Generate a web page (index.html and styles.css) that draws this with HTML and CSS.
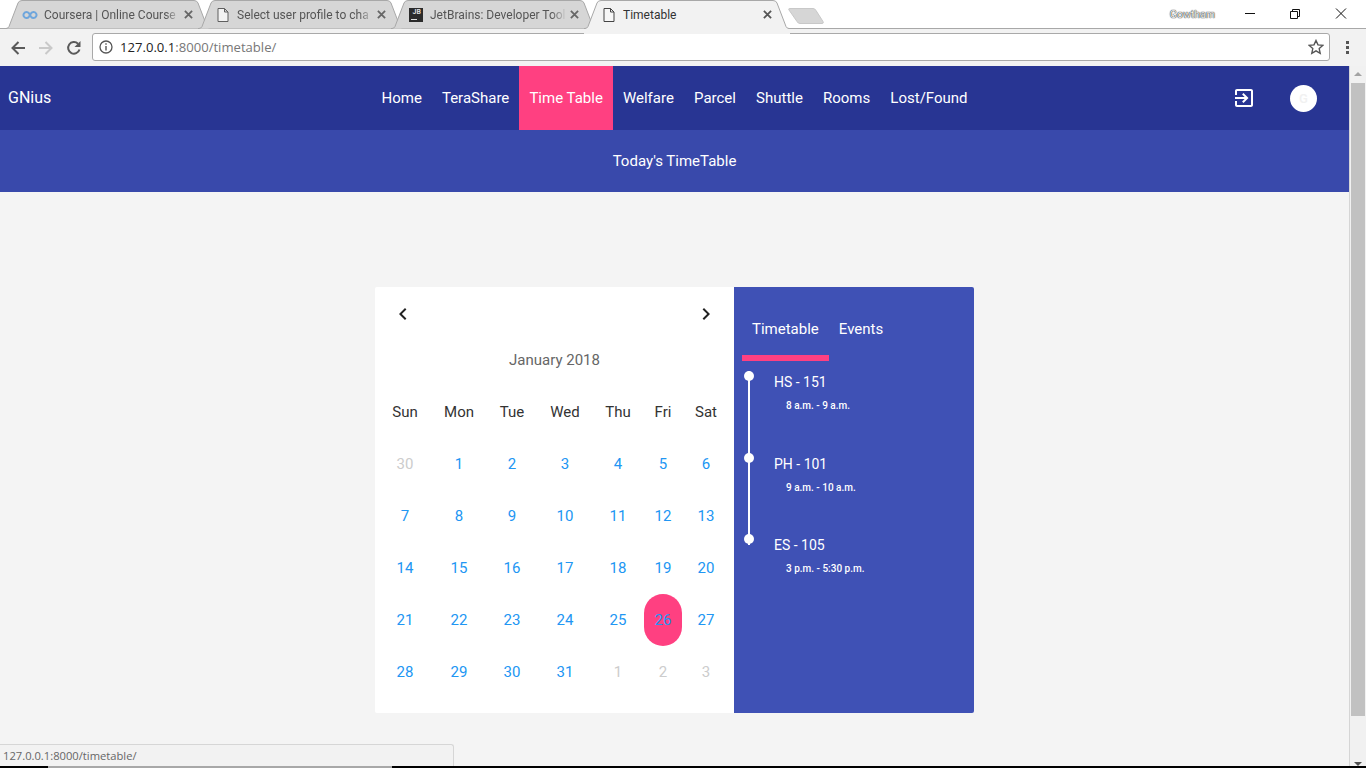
FILE: index.html
```html
<!DOCTYPE html>
<html lang="en">
<head>
    <meta charset="UTF-8">
    <title>Timetable</title>
    <link rel="stylesheet" href="styles.css">
</head>
<body>
<div class="tabstrip">
    <div class="tabs">
        <div class="tab">
            <svg class="tab-bg" viewBox="0 0 206 29"><path d="M0 28.500h1q2 0 3-2L13 3q1-2.500 4-2.500h172q3 0 4 2.500l9 23.500q1 2 3 2h1" fill="#d6d6d6" stroke="#a8a8a8"/></svg>
            <svg class="fav" viewBox="0 0 16 16"><path d="M4.500 5a3 3 0 1 0 2.400 4.800L9.100 6.200A3 3 0 1 1 11.500 11a3 3 0 0 1-2.400-1.200L6.900 6.200A3 3 0 0 0 4.500 5z" fill="none" stroke="#6fa6dc" stroke-width="2"/></svg>
            <span class="tab-title">Coursera | Online Course</span>
            <svg class="tab-x" viewBox="0 0 10 10"><path d="M1 1l8 8M9 1l-8 8" stroke="#666" stroke-width="2"/></svg>
        </div>
        <div class="tab">
            <svg class="tab-bg" viewBox="0 0 206 29"><path d="M0 28.500h1q2 0 3-2L13 3q1-2.500 4-2.500h172q3 0 4 2.500l9 23.500q1 2 3 2h1" fill="#d6d6d6" stroke="#a8a8a8"/></svg>
            <svg class="fav" viewBox="0 0 16 16"><path d="M3 1.500h6.500l3.500 3.500v9.500H3zM9.500 1.500V5H13" fill="#f2f2f2" stroke="#5f5f5f"/></svg>
            <span class="tab-title">Select user profile to cha</span>
            <svg class="tab-x" viewBox="0 0 10 10"><path d="M1 1l8 8M9 1l-8 8" stroke="#666" stroke-width="2"/></svg>
        </div>
        <div class="tab">
            <svg class="tab-bg" viewBox="0 0 206 29"><path d="M0 28.500h1q2 0 3-2L13 3q1-2.500 4-2.500h172q3 0 4 2.500l9 23.500q1 2 3 2h1" fill="#d6d6d6" stroke="#a8a8a8"/></svg>
            <span class="fav jb">JB</span>
            <span class="tab-title">JetBrains: Developer Tool</span>
            <svg class="tab-x" viewBox="0 0 10 10"><path d="M1 1l8 8M9 1l-8 8" stroke="#666" stroke-width="2"/></svg>
        </div>
        <div class="tab tab-active">
            <svg class="tab-bg" viewBox="0 0 206 34"><path d="M0 28.500h1q2 0 3-2L13 3q1-2.500 4-2.500h172q3 0 4 2.500l9 23.500q1 2 3 2h1V34H0z" fill="#f2f2f2"/><path d="M0 28.500h1q2 0 3-2L13 3q1-2.500 4-2.500h172q3 0 4 2.500l9 23.500q1 2 3 2h1" fill="none" stroke="#a8a8a8"/></svg>
            <svg class="fav" viewBox="0 0 16 16"><path d="M3 1.500h6.500l3.500 3.500v9.500H3zM9.500 1.500V5H13" fill="#f7f7f7" stroke="#444"/></svg>
            <span class="tab-title">Timetable</span>
            <svg class="tab-x" viewBox="0 0 10 10"><path d="M1 1l8 8M9 1l-8 8" stroke="#555" stroke-width="2"/></svg>
        </div>
        <svg class="newtab" viewBox="0 0 36 19"><path d="M2 2.500h23q2 0 3 2l7 11q1 2-1 2H12q-2 0-3-2L1 4q-1-1.500 1-1.500z" fill="#d6d6d6" stroke="#c8c8c8"/></svg>
    </div>
    <div class="winctl">
        <span class="user">Gowtham</span>
        <svg class="wbtn" viewBox="0 0 46 16"><path d="M19 7.500h10" stroke="#111"/></svg>
        <svg class="wbtn" viewBox="0 0 46 16"><path d="M18.500 5.500h7v7h-7zM20.500 5.500v-2h7v7h-2" fill="none" stroke="#111"/></svg>
        <svg class="wbtn" viewBox="0 0 46 16"><path d="M18 2.500l10 10M28 2.500l-10 10" stroke="#111"/></svg>
    </div>
</div>

<div class="toolbar">
    <svg class="tool-ic" viewBox="0 0 16 16"><path d="M15 8H2.500M8.500 2 2.500 8l6 6" fill="none" stroke="#5a5a5a" stroke-width="2"/></svg>
    <svg class="tool-ic" viewBox="0 0 16 16"><path d="M1 8h12.500M7.500 2l6 6-6 6" fill="none" stroke="#c9c9c9" stroke-width="2"/></svg>
    <svg class="tool-ic" viewBox="0 0 16 16"><path d="M13.500 9.500A5.800 5.800 0 1 1 12 3.700" fill="none" stroke="#5a5a5a" stroke-width="2"/><path d="M14.500 1v6h-6z" fill="#5a5a5a"/></svg>
    <div class="omnibox">
        <svg class="info" viewBox="0 0 14 14"><circle cx="7" cy="7" r="6" fill="none" stroke="#555" stroke-width="1.300"/><path d="M6.300 6h1.400v4.500H6.300zM6.300 3.300h1.400v1.500H6.300z" fill="#555"/></svg>
        <span class="url"><b>127.0.0.1</b>:8000/timetable/</span>
        <svg class="star" viewBox="0 0 16 16"><path d="M8 1.500l2 4.400 4.800.5-3.600 3.200 1 4.700L8 11.900l-4.200 2.400 1-4.700L1.200 6.400 6 5.900z" fill="none" stroke="#555" stroke-width="1.400"/></svg>
    </div>
    <div class="menu-dots"><i></i><i></i><i></i></div>
</div>

<div class="viewport">
    <div class="page">
        <nav class="navbar">
            <a class="brand">GNius</a>
            <ul class="nav-links">
                <li>Home</li>
                <li>TeraShare</li>
                <li class="active">Time Table</li>
                <li>Welfare</li>
                <li>Parcel</li>
                <li>Shuttle</li>
                <li>Rooms</li>
                <li>Lost/Found</li>
            </ul>
            <div class="nav-right">
                <svg class="exit-ic" viewBox="0 0 24 24"><path d="M10.090 15.590 11.500 17l5-5-5-5-1.410 1.410L12.670 11H3v2h9.670l-2.580 2.590zM19 3H5c-1.110 0-2 .9-2 2v4h2V5h14v14H5v-4H3v4c0 1.100.89 2 2 2h14c1.100 0 2-.9 2-2V5c0-1.100-.9-2-2-2z" fill="#fff"/></svg>
                <span class="avatar">G</span>
            </div>
        </nav>
        <header class="subhead">Today's TimeTable</header>

        <main class="content">
            <section class="card">
                <div class="calendar">
                    <div class="cal-nav">
                        <svg viewBox="0 0 24 24"><path d="M15.410 7.410 14 6l-6 6 6 6 1.410-1.410L10.830 12z" fill="#222"/></svg>
                        <svg viewBox="0 0 24 24"><path d="M10 6 8.590 7.410 13.170 12l-4.580 4.590L10 18l6-6z" fill="#222"/></svg>
                    </div>
                    <div class="cal-title">January 2018</div>
                    <div class="cal-grid" id="calGrid"></div>
                </div>
                <aside class="side">
                    <div class="side-tabs">
                        <span class="side-tab">Timetable</span>
                        <span class="side-tab">Events</span>
                    </div>
                    <div class="side-indicator"></div>
                    <ul class="timeline">
                        <li><b>HS - 151</b><small>8 a.m. - 9 a.m.</small></li>
                        <li><b>PH - 101</b><small>9 a.m. - 10 a.m.</small></li>
                        <li><b>ES - 105</b><small>3 p.m. - 5:30 p.m.</small></li>
                    </ul>
                </aside>
            </section>
        </main>
        <div class="status">127.0.0.1:8000/timetable/</div>
    </div>
    <div class="scrollbar">
        <span class="arrow-up"></span>
        <span class="thumb"></span>
        <span class="arrow-down"></span>
    </div>
</div>
<div class="edge"></div>

<script>
    const heads = ['Sun', 'Mon', 'Tue', 'Wed', 'Thu', 'Fri', 'Sat'];
    const days = [30, 1, 2, 3, 4, 5, 6, 7, 8, 9, 10, 11, 12, 13, 14, 15, 16, 17, 18, 19, 20,
        21, 22, 23, 24, 25, 26, 27, 28, 29, 30, 31, 1, 2, 3];
    const grid = document.getElementById('calGrid');

    heads.forEach(h => {
        const el = document.createElement('div');
        el.className = 'cal-head';
        el.textContent = h;
        grid.appendChild(el);
    });

    days.forEach((d, i) => {
        const el = document.createElement('div');
        el.className = 'cal-day';
        if (i === 0 || i > 31) el.classList.add('muted');
        if (i === 26) el.classList.add('today');
        el.textContent = d;
        grid.appendChild(el);
    });
</script>
</body>
</html>
```

FILE: styles.css
```css
* {
    box-sizing: border-box;
}
html, body {
    margin: 0;
    height: 768px;
    overflow: hidden;
}
body {
    font-family: Roboto, "Liberation Sans", sans-serif;
    background: #f4f4f4;
    display: flex;
    flex-direction: column;
}

/* browser chrome */
.tabstrip {
    height: 29px;
    flex: none;
    display: flex;
    justify-content: space-between;
    background: #fff;
    border-bottom: 1px solid #a8a8a8;
    padding-left: 5px;
}
.tabs {
    display: flex;
    align-items: flex-start;
}
.tab {
    position: relative;
    width: 206px;
    height: 29px;
    margin-right: -13px;
    padding: 0 18px 0 17px;
    display: flex;
    align-items: center;
    font-size: 12px;
    color: #555;
}
.tab-active {
    color: #333;
    z-index: 1;
}
.tab-bg {
    position: absolute;
    left: 0;
    top: 0;
    width: 206px;
    height: 29px;
}
.tab-active .tab-bg {
    height: 34px;
}
.fav {
    position: relative;
    flex: none;
    width: 16px;
    height: 16px;
    margin-right: 6px;
}
.jb {
    background: #2b2b2b;
    color: #ddd;
    font-size: 7px;
    font-weight: 700;
    line-height: 9px;
    text-align: right;
    padding-right: 2px;
    width: 14px;
    height: 14px;
    margin: 0 7px 0 1px;
}
.jb::after {
    content: "";
    position: absolute;
    left: 2px;
    bottom: 2px;
    width: 6px;
    height: 1px;
    background: #ddd;
}
.tab-title {
    position: relative;
    flex: 1;
    overflow: hidden;
    white-space: nowrap;
    -webkit-mask-image: linear-gradient(to right, #000 88%, transparent 99%);
    mask-image: linear-gradient(to right, #000 88%, transparent 99%);
}
.tab-active .tab-title {
    -webkit-mask-image: none;
    mask-image: none;
}
.tab-x {
    position: relative;
    flex: none;
    width: 9px;
    height: 9px;
    margin-left: 2px;
}
.newtab {
    position: relative;
    width: 36px;
    height: 19px;
    margin: 6px 0 0 11px;
}
.winctl {
    display: flex;
    align-items: flex-start;
    padding-right: 2px;
}
.user {
    margin: 8px 11px 0 0;
    font-size: 10.500px;
    line-height: 13px;
    color: #eee;
    text-shadow: 0 0 1px #222, 0 0 1px #222;
}
.wbtn {
    width: 46px;
    height: 16px;
    margin-top: 6px;
}

.toolbar {
    height: 37px;
    flex: none;
    background: #f2f2f2;
    display: flex;
    align-items: center;
    padding: 0 0 0 10px;
    position: relative;
}
.tool-ic {
    width: 16px;
    height: 16px;
    margin-right: 12px;
    flex: none;
}
.omnibox {
    width: 1238px;
    height: 28px;
    margin: -1px 0 0 -2px;
    background: #fff;
    border: 1px solid #a9a9a9;
    border-radius: 3px;
    display: flex;
    align-items: center;
    padding: 0 5px 0 6px;
}
.info {
    width: 14px;
    height: 14px;
    margin-right: 7px;
}
.url {
    flex: 1;
    font-family: "Open Sans", "Liberation Sans", sans-serif;
    font-size: 13.100px;
    color: #777;
}
.url b {
    font-weight: 400;
    color: #222;
}
.star {
    width: 16px;
    height: 16px;
}
.menu-dots {
    margin-left: 16px;
    display: flex;
    flex-direction: column;
    gap: 2px;
}
.menu-dots i {
    width: 3px;
    height: 3px;
    background: #555;
}

/* page */
.viewport {
    flex: 1;
    display: flex;
    min-height: 0;
}
.page {
    position: relative;
    flex: 1;
    display: flex;
    flex-direction: column;
    border-right: 1px solid #d5d5d5;
}
.navbar {
    height: 64px;
    flex: none;
    background: #283593;
    color: #fff;
    display: grid;
    grid-template-columns: 1fr auto 1fr;
    align-items: center;
}
.brand {
    padding: 0 0 1px 8px;
    font-size: 16px;
    font-weight: 450;
}
.nav-links {
    display: flex;
    list-style: none;
    margin: 0;
    padding: 0;
    height: 64px;
    font-size: 15px;
    font-weight: 450;
}
.nav-links li {
    padding: 0 10.050px;
    line-height: 64px;
}
.nav-links .active {
    background: #ff4081;
}
.nav-right {
    display: flex;
    justify-content: flex-end;
    align-items: center;
    padding-right: 32px;
    gap: 34px;
}
.exit-ic {
    width: 24px;
    height: 24px;
}
.avatar {
    width: 27px;
    height: 27px;
    border-radius: 50%;
    background: #fff;
    color: #f1f1f1;
    font-size: 13px;
    font-weight: 500;
    line-height: 27px;
    text-align: center;
}
.subhead {
    height: 62px;
    flex: none;
    background: #3949ab;
    color: #fff;
    font-size: 15px;
    font-weight: 450;
    line-height: 62px;
    text-align: center;
}
.content {
    flex: 1;
    padding-top: 95px;
    display: flex;
    justify-content: center;
}

.card {
    display: flex;
    width: 599px;
    height: 426px;
    border-radius: 2px;
    overflow: hidden;
}
.calendar {
    width: 359px;
    background: #fff;
    padding-left: 3px;
}
.cal-nav {
    display: flex;
    justify-content: space-between;
    padding: 15px 16px 0 13px;
}
.cal-nav svg {
    width: 24px;
    height: 24px;
}
.cal-title {
    margin-top: 14px;
    height: 40px;
    line-height: 40px;
    text-align: center;
    font-size: 15px;
    color: #666;
    padding-right: 3px;
}
.cal-grid {
    display: grid;
    grid-template-columns: 54px 54px 52px 54px 52px 38px 48px;
    grid-auto-rows: 52px;
    margin-top: 6px;
    font-size: 15px;
}
.cal-head, .cal-day {
    display: flex;
    align-items: center;
    justify-content: center;
}
.cal-head {
    color: #333;
}
.cal-day {
    color: #2196f3;
}
.cal-day.muted {
    color: #ccc;
}
.cal-day.today {
    background: #ff4081;
    border-radius: 19px;
}

.side {
    flex: 1;
    background: #3f51b5;
    color: #fff;
    padding-left: 8px;
}
.side-tabs {
    display: flex;
    padding: 32px 0 0 10px;
    gap: 20px;
    font-size: 15px;
    font-weight: 450;
    line-height: 20px;
}
.side-indicator {
    width: 87px;
    height: 6px;
    margin-top: 16px;
    background: #ff4081;
}
.timeline {
    position: relative;
    list-style: none;
    margin: 0;
    padding: 10px 0 0 32px;
}
.timeline::before {
    content: "";
    position: absolute;
    left: 6px;
    top: 10px;
    width: 2px;
    height: 174px;
    background: #fff;
}
.timeline li {
    position: relative;
    height: 81.500px;
    padding-top: 1px;
}
.timeline li::before {
    content: "";
    position: absolute;
    left: -30px;
    top: 0;
    width: 10px;
    height: 10px;
    border-radius: 50%;
    background: #fff;
}
.timeline b {
    display: block;
    font-size: 14px;
    font-weight: 450;
    line-height: 20px;
}
.timeline small {
    display: block;
    font-size: 10px;
    font-weight: 500;
    line-height: 14px;
    margin: 7px 0 0 12px;
}

.status {
    position: absolute;
    left: 0;
    bottom: 0;
    width: 454px;
    height: 22px;
    background: #f2f2f2;
    border: 1px solid #d6d6d6;
    border-width: 1px 1px 0 0;
    border-top-right-radius: 3px;
    font-family: "Open Sans", "Liberation Sans", sans-serif;
    font-size: 11.200px;
    line-height: 21px;
    color: #666;
    padding-left: 3px;
}
.scrollbar {
    width: 16px;
    flex: none;
    background: #f1f1f1;
    display: flex;
    flex-direction: column;
    align-items: center;
    padding-top: 6px;
}
.arrow-up, .arrow-down {
    width: 0;
    height: 0;
    border: 4px solid transparent;
    border-top: 0;
    border-bottom: 4px solid #a3a3a3;
}
.arrow-down {
    border-top: 4px solid #505050;
    border-bottom: 0;
}
.thumb {
    width: 14px;
    height: 633px;
    margin: 7px 0 46px;
    background: #c1c1c1;
}
.edge {
    height: 2px;
    flex: none;
    background: linear-gradient(to right, #000 48px, #a8a8a8 48px, #a8a8a8 392px, #000 392px);
}
```
